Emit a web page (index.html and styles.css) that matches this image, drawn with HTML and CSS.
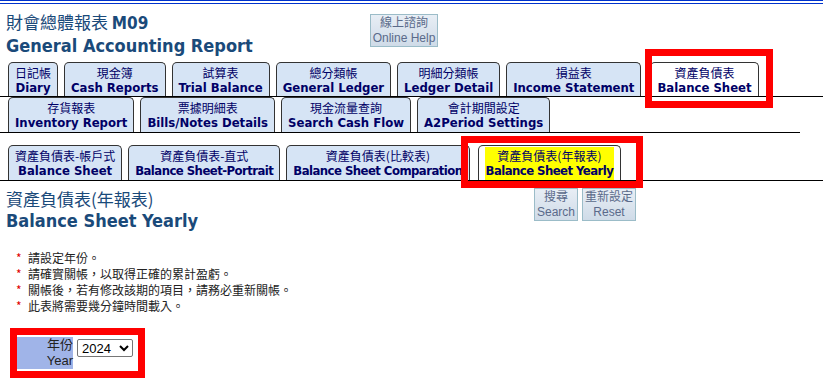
FILE: index.html
```html
<!DOCTYPE html>
<html lang="zh-Hant">
<head>
    <meta charset="UTF-8">
    <title>General Accounting Report</title>
    <link rel="stylesheet" href="styles.css">
</head>
<body>
    <div class="topline"></div>

    <div class="header">
        <div class="title">
            <div class="title-zh">財會總體報表 <b>M09</b></div>
            <div class="title-en">General Accounting Report</div>
        </div>
        <button class="btn help">線上諮詢<br>Online Help</button>
    </div>

    <div class="tabs row1">
        <a class="tab">日記帳<b>Diary</b></a>
        <a class="tab">現金簿<b>Cash Reports</b></a>
        <a class="tab">試算表<b>Trial Balance</b></a>
        <a class="tab">總分類帳<b>General Ledger</b></a>
        <a class="tab">明細分類帳<b>Ledger Detail</b></a>
        <a class="tab">損益表<b>Income Statement</b></a>
        <a class="tab active">資產負債表<b>Balance Sheet</b></a>
    </div>
    <div class="tabs row2">
        <a class="tab">存貨報表<b>Inventory Report</b></a>
        <a class="tab">票據明細表<b>Bills/Notes Details</b></a>
        <a class="tab">現金流量查詢<b>Search Cash Flow</b></a>
        <a class="tab">會計期間設定<b>A2Period Settings</b></a>
    </div>

    <div class="tabs row3">
        <a class="tab">資產負債表-帳戶式<b>Balance Sheet</b></a>
        <a class="tab tight">資產負債表-直式<b>Balance Sheet-Portrait</b></a>
        <a class="tab tight">資產負債表(比較表)<b>Balance Sheet Comparation</b></a>
        <a class="tab tight active"><span class="hl">資產負債表(年報表)<b>Balance Sheet Yearly</b></span></a>
    </div>

    <div class="page-head">
        <div class="page-title">
            <div class="page-zh">資產負債表(年報表)</div>
            <div class="page-en">Balance Sheet Yearly</div>
        </div>
        <div class="actions">
            <button class="btn">搜尋<br>Search</button>
            <button class="btn">重新設定<br>Reset</button>
        </div>
    </div>

    <ul class="notes">
        <li>請設定年份。</li>
        <li>請確實關帳，以取得正確的累計盈虧。</li>
        <li>關帳後，若有修改該期的項目，請務必重新關帳。</li>
        <li>此表將需要幾分鐘時間載入。</li>
    </ul>

    <div class="form">
        <div class="label">年份<br>Year</div>
        <select class="year">
            <option>2024</option>
            <option>2023</option>
        </select>
    </div>

    <!-- highlight frames -->
    <div class="mark mark-tab1"></div>
    <div class="mark mark-tab2"></div>
    <div class="mark mark-form"></div>
</body>
</html>
```

FILE: styles.css
```css
* {
    box-sizing: border-box;
}

body {
    margin: 0;
    font-family: "DejaVu Sans Condensed", "Noto Sans CJK TC", sans-serif;
    color: #000066;
    background: #fff;
    position: relative;
    width: 823px;
    height: 384px;
    overflow: hidden;
}

.topline {
    height: 4px;
    border-top: 1px solid #0033cc;
    border-bottom: 1px solid #0033cc;
}

.header {
    display: flex;
    align-items: flex-start;
    padding: 6px 0 0 6px;
    height: 58px;
}

.title {
    width: 364px;
    color: #1a4a7a;
}

.title-zh {
    font-family: "Noto Sans CJK TC", sans-serif;
    font-size: 17px;
    line-height: 24px;
}

.title-zh b {
    font-family: "DejaVu Sans Condensed", sans-serif;
}

.title-en {
    font-size: 18px;
    font-weight: bold;
    line-height: 22px;
}

.btn {
    font-family: "Liberation Sans", "Noto Sans CJK TC", sans-serif;
    font-size: 12px;
    line-height: 15px;
    color: #5a6a8a;
    background: linear-gradient(#e8eef5, #cfdbe8);
    border: 1px solid #9bbcc8;
    padding: 1px 2px;
    margin: 0;
    white-space: nowrap;
}

.help {
    margin-top: 4px;
    width: 68px;
    height: 33px;
    padding: 0;
}

.tabs {
    display: flex;
    align-items: flex-end;
    gap: 6px;
    padding-left: 8px;
    border-bottom: 1px solid #000;
}

.tab {
    display: flex;
    flex-direction: column;
    align-items: center;
    height: 34px;
    padding: 2px 6px 0;
    background: #d6e4f5;
    border: 1px solid #333;
    border-bottom: none;
    border-radius: 5px 5px 0 0;
    font-family: "Noto Sans CJK TC", sans-serif;
    font-size: 12px;
    line-height: 15px;
    color: #000066;
}

.tab b {
    font-family: "DejaVu Sans Condensed", sans-serif;
    font-size: 13px;
    line-height: 16px;
}

.tab.tight b {
    letter-spacing: -0.55px;
}

.tab.active {
    background: #fff;
}

.row1 .tab.active {
    margin-left: 3px;
}

.row2 {
    width: 800px;
}

.row2 .tab {
    height: 35px;
}

.row3 {
    margin-top: 12px;
}

.row3 .tab {
    height: 35px;
}

.row3 .tab.active {
    margin-left: 2px;
    padding: 1px 6px 0;
}

.hl {
    display: flex;
    flex-direction: column;
    align-items: center;
    background: #ffff00;
    height: 33px;
    padding: 1px 1px 0;
}

.page-head {
    display: flex;
    align-items: flex-start;
    padding: 7px 0 0 6px;
}

.page-title {
    width: 528px;
    color: #1a4a7a;
}

.page-zh {
    font-family: "Noto Sans CJK TC", sans-serif;
    font-size: 17px;
    line-height: 22px;
}

.page-en {
    font-size: 18px;
    font-weight: bold;
    line-height: 22px;
}

.actions {
    display: flex;
    gap: 4px;
}

.actions .btn {
    height: 33px;
}

.notes {
    list-style: none;
    margin: 18px 0 0;
    padding: 0 0 0 16px;
    font-family: "Noto Sans CJK TC", sans-serif;
    font-size: 12px;
    line-height: 16px;
    color: #222;
}

.notes li::before {
    content: "*";
    color: #e00000;
    display: inline-block;
    width: 12px;
}

.form {
    display: flex;
    align-items: flex-start;
    gap: 4px;
    margin: 23px 0 0 17px;
}

.label {
    width: 56px;
    background: #a0b4e8;
    text-align: right;
    font-family: "Liberation Sans", "Noto Sans CJK TC", sans-serif;
    font-size: 13px;
    line-height: 16px;
    color: #222;
}

.year {
    margin-top: 2px;
    width: 56px;
    height: 18px;
    font-family: "Liberation Sans", sans-serif;
    font-size: 13px;
    border: 1px solid #767676;
    border-radius: 2px;
    background: #fff;
}

.mark {
    position: absolute;
    border: 7px solid #ff0000;
}

.mark-tab1 {
    left: 645px;
    top: 49px;
    width: 128px;
    height: 59px;
}

.mark-tab2 {
    left: 461px;
    top: 136px;
    width: 182px;
    height: 52px;
}

.mark-form {
    left: 10px;
    top: 328px;
    width: 135px;
    height: 50px;
}
```
